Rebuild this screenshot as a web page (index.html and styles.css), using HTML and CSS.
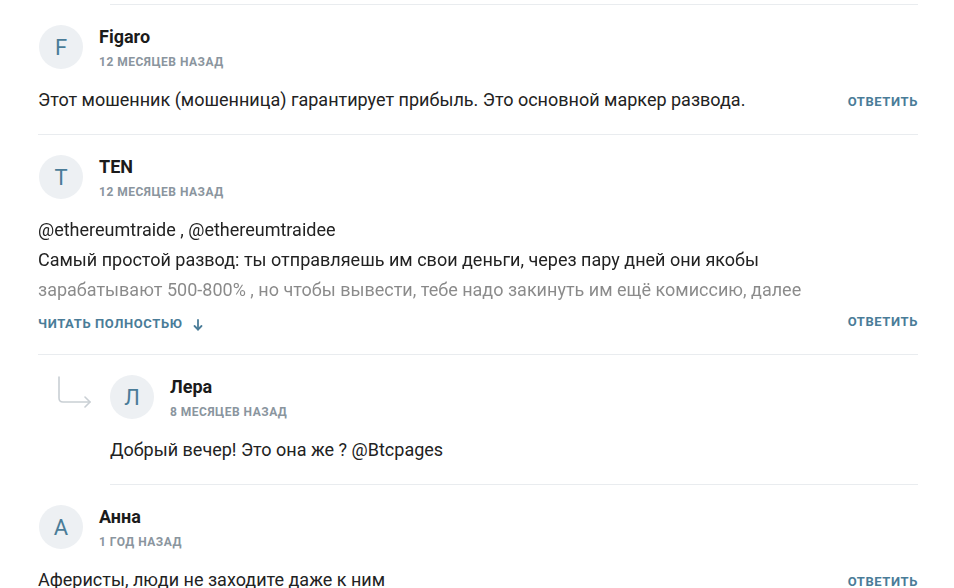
FILE: index.html
```html
<!DOCTYPE html>
<html lang="ru">
<head>
    <meta charset="UTF-8">
    <meta name="viewport" content="width=device-width, initial-scale=1.0">
    <title>Комментарии</title>
    <link rel="stylesheet" href="styles.css">
</head>
<body>

    <div class="comments">
        <div class="reply-end"></div>

        <div class="comment">
            <div class="comment-head">
                <div class="avatar">F</div>
                <div class="author">
                    <div class="author-name">Figaro</div>
                    <div class="comment-date">12 месяцев назад</div>
                </div>
            </div>
            <div class="comment-body">
                <div class="comment-text">Этот мошенник (мошенница) гарантирует прибыль. Это основной маркер развода.</div>
                <a class="reply-btn" href="#">Ответить</a>
            </div>
        </div>

        <div class="comment">
            <div class="comment-head">
                <div class="avatar">T</div>
                <div class="author">
                    <div class="author-name">TEN</div>
                    <div class="comment-date">12 месяцев назад</div>
                </div>
            </div>
            <div class="comment-body">
                <div class="comment-main">
                    <div class="comment-text collapsed">
                        @ethereumtraide , @ethereumtraidee<br>
                        Самый простой развод: ты отправляешь им свои деньги, через пару дней они якобы<br>
                        зарабатывают 500-800% , но чтобы вывести, тебе надо закинуть им ещё комиссию, далее
                    </div>
                    <a class="read-more" href="#">Читать полностью
                        <svg class="read-more-arrow" width="10" height="12" viewBox="0 0 10 12" fill="none" stroke="#4a7c98" stroke-width="1.8" stroke-linecap="round" stroke-linejoin="round">
                            <path d="M5 1 V10.5"/>
                            <path d="M1.5 7 L5 10.5 L8.5 7"/>
                        </svg>
                    </a>
                </div>
                <a class="reply-btn" href="#">Ответить</a>
            </div>
        </div>

        <div class="reply">
            <div class="reply-arrow">
                <svg width="36" height="32" viewBox="0 0 36 32" fill="none" stroke="#c9cfd4" stroke-width="1.6" stroke-linecap="round" stroke-linejoin="round">
                    <path d="M2 1 V22 Q2 26 6 26 H33"/>
                    <path d="M28 21 L33 26 L28 31"/>
                </svg>
            </div>
            <div class="comment">
                <div class="comment-head">
                    <div class="avatar">Л</div>
                    <div class="author">
                        <div class="author-name">Лера</div>
                        <div class="comment-date">8 месяцев назад</div>
                    </div>
                </div>
                <div class="comment-body">
                    <div class="comment-text">Добрый вечер! Это она же ? @Btcpages</div>
                </div>
            </div>
        </div>

        <div class="comment">
            <div class="comment-head">
                <div class="avatar">А</div>
                <div class="author">
                    <div class="author-name">Анна</div>
                    <div class="comment-date">1 год назад</div>
                </div>
            </div>
            <div class="comment-body">
                <div class="comment-text">Аферисты, люди не заходите даже к ним</div>
                <a class="reply-btn" href="#">Ответить</a>
            </div>
        </div>
    </div>

</body>
</html>
```

FILE: styles.css
```css
body {
    font-family: Roboto, "Liberation Sans", sans-serif;
    background-color: #fff;
    color: #222;
    margin: 0;
}
.comments {
    width: 880px;
    margin-left: 38px;
}
.reply-end {
    height: 4px;
    margin-left: 72px;
    border-bottom: 1px solid #e9ecef;
}
.comment {
    padding: 20px 0 19px;
    border-bottom: 1px solid #e9ecef;
}
.comment-head {
    display: flex;
    gap: 16px;
    padding-left: 1px;
}
.avatar {
    width: 44px;
    height: 44px;
    border-radius: 50%;
    background-color: #edf0f3;
    color: #4a7c98;
    font-size: 22px;
    display: flex;
    align-items: center;
    justify-content: center;
}
.author {
    padding-top: 1px;
}
.author-name {
    font-size: 18px;
    font-weight: 700;
    line-height: 22px;
    color: #1b1b1b;
}
.comment-date {
    margin-top: 8px;
    font-size: 12px;
    font-weight: 700;
    line-height: 13px;
    letter-spacing: 0.5px;
    text-transform: uppercase;
    color: #8a959e;
}
.comment-body {
    display: flex;
    align-items: flex-end;
    gap: 20px;
    margin-top: 16px;
}
.comment-main {
    flex: 1;
}
.comment-text {
    flex: 1;
    font-size: 18px;
    line-height: 30px;
}
.comment-text.collapsed {
    -webkit-mask-image: linear-gradient(to bottom, #000 62%, rgba(0, 0, 0, 0.55) 72%, rgba(0, 0, 0, 0.5) 100%);
    mask-image: linear-gradient(to bottom, #000 62%, rgba(0, 0, 0, 0.55) 72%, rgba(0, 0, 0, 0.5) 100%);
}
.read-more {
    display: inline-flex;
    align-items: center;
    margin: 9px 0 1px;
    font-size: 13px;
    font-weight: 700;
    line-height: 20px;
    letter-spacing: 0.6px;
    text-transform: uppercase;
    text-decoration: none;
    color: #4a7c98;
}
.read-more-arrow {
    margin-left: 10px;
    margin-top: 2px;
}
.reply-btn {
    font-size: 13px;
    font-weight: 700;
    line-height: 27px;
    letter-spacing: 0.6px;
    text-transform: uppercase;
    text-decoration: none;
    color: #4a7c98;
}
.reply {
    display: flex;
}
.reply-arrow {
    width: 72px;
    flex: none;
    padding: 21px 0 0 19px;
    box-sizing: border-box;
}
.reply .comment {
    flex: 1;
}
.reply .comment-head {
    padding-left: 0;
}
```
